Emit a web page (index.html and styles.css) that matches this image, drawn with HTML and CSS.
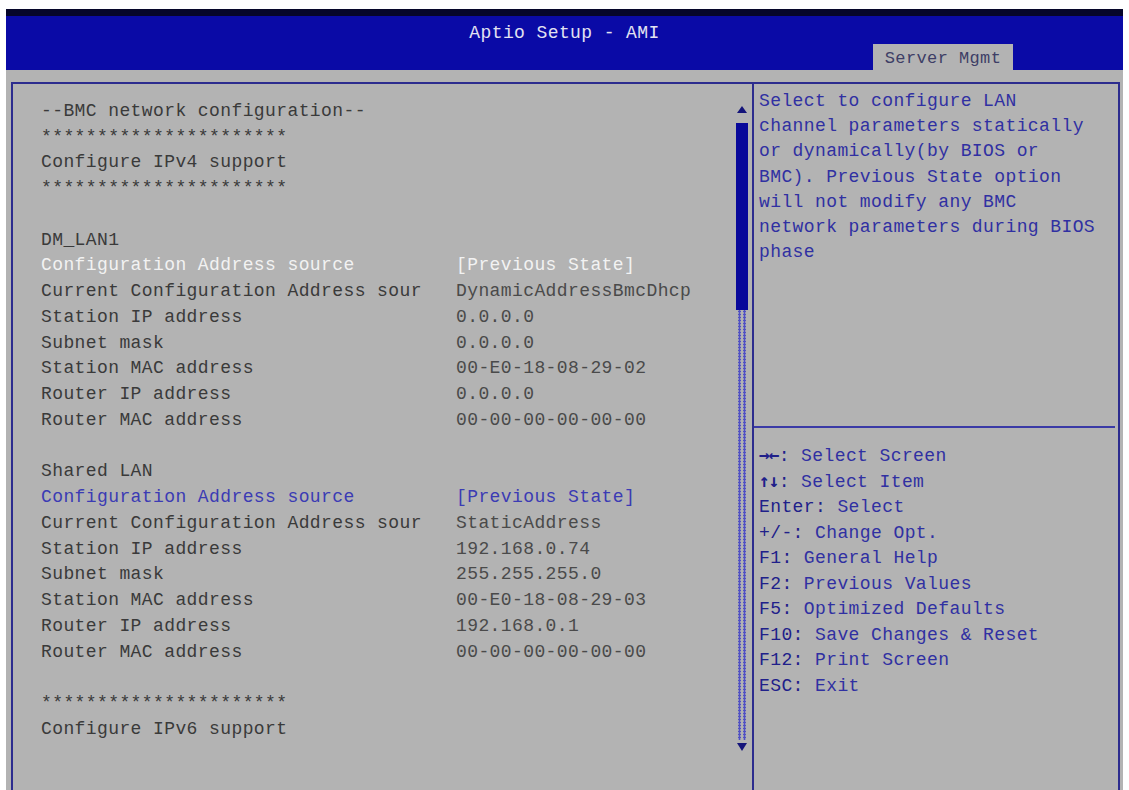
FILE: index.html
```html
<!DOCTYPE html>
<html lang="en">
<head>
    <meta charset="UTF-8">
    <meta name="viewport" content="width=device-width, initial-scale=1.0">
    <title>Aptio Setup - AMI</title>
    <link rel="stylesheet" href="styles.css">
</head>
<body>
    <div class="screen">
        <div class="topbar">
            <div class="title">Aptio Setup - AMI</div>
            <div class="tab">Server Mgmt</div>
        </div>
        <div class="strip"></div>
        <div class="frame">
            <div class="menu">
                <div class="rows">
                    <div class="full">--BMC network configuration--</div>
                    <div class="full">**********************</div>
                    <div class="full">Configure IPv4 support</div>
                    <div class="full">**********************</div>
                    <div class="full"></div>

                    <div class="full">DM_LAN1</div>
                    <div class="active">Configuration Address source</div>
                    <div class="active">[Previous State]</div>
                    <div>Current Configuration Address sour</div>
                    <div class="val">DynamicAddressBmcDhcp</div>
                    <div>Station IP address</div>
                    <div class="val">0.0.0.0</div>
                    <div>Subnet mask</div>
                    <div class="val">0.0.0.0</div>
                    <div>Station MAC address</div>
                    <div class="val">00-E0-18-08-29-02</div>
                    <div>Router IP address</div>
                    <div class="val">0.0.0.0</div>
                    <div>Router MAC address</div>
                    <div class="val">00-00-00-00-00-00</div>
                    <div class="full"></div>

                    <div class="full">Shared LAN</div>
                    <div class="option">Configuration Address source</div>
                    <div class="option">[Previous State]</div>
                    <div>Current Configuration Address sour</div>
                    <div class="val">StaticAddress</div>
                    <div>Station IP address</div>
                    <div class="val">192.168.0.74</div>
                    <div>Subnet mask</div>
                    <div class="val">255.255.255.0</div>
                    <div>Station MAC address</div>
                    <div class="val">00-E0-18-08-29-03</div>
                    <div>Router IP address</div>
                    <div class="val">192.168.0.1</div>
                    <div>Router MAC address</div>
                    <div class="val">00-00-00-00-00-00</div>
                    <div class="full"></div>

                    <div class="full">**********************</div>
                    <div class="full">Configure IPv6 support</div>
                </div>
                <div class="scrollbar">
                    <div class="arrow-up"></div>
                    <div class="thumb"></div>
                    <div class="track"></div>
                    <div class="arrow-down"></div>
                </div>
            </div>
            <div class="side">
                <div class="help">
                    Select to configure LAN<br>
                    channel parameters statically<br>
                    or dynamically(by BIOS or<br>
                    BMC). Previous State option<br>
                    will not modify any BMC<br>
                    network parameters during BIOS<br>
                    phase
                </div>
                <div class="keys">
                    <div><span class="key arrows">&rarr;&larr;</span><span class="key">:</span> Select Screen</div>
                    <div><span class="key arrows">&uarr;&darr;</span><span class="key">:</span> Select Item</div>
                    <div><span class="key">Enter:</span> Select</div>
                    <div><span class="key">+/-:</span> Change Opt.</div>
                    <div><span class="key">F1:</span> General Help</div>
                    <div><span class="key">F2:</span> Previous Values</div>
                    <div><span class="key">F5:</span> Optimized Defaults</div>
                    <div><span class="key">F10:</span> Save Changes &amp; Reset</div>
                    <div><span class="key">F12:</span> Print Screen</div>
                    <div><span class="key">ESC:</span> Exit</div>
                </div>
            </div>
        </div>
    </div>
</body>
</html>
```

FILE: styles.css
```css
body {
    margin: 0;
    padding: 0;
    background: #fff;
    height: 790px;
    overflow: hidden;
    font-family: "Liberation Mono", "DejaVu Sans Mono", monospace;
    font-size: 18px;
    letter-spacing: 0.4px;
    color: #3a3a3a;
}
.screen {
    margin: 9px 6px 0 6px;
    background: #b3b3b3;
    height: 781px;
    display: flex;
    flex-direction: column;
}

/* blue title bar with the page tab */
.topbar {
    background: #0a0aa6;
    border-top: 7px solid #06062a;
    height: 54px;
    display: flex;
    flex-direction: column;
}
.title {
    text-align: center;
    color: #e2e2f2;
    padding-top: 6px;
    line-height: 23px;
    height: 22px;
}
.tab {
    align-self: flex-end;
    margin-right: 110px;
    width: 140px;
    height: 26px;
    line-height: 29px;
    background: #b3b3b3;
    color: #3e3e66;
    font-size: 17px;
    text-align: center;
}
.strip {
    height: 12px;
}

/* main frame */
.frame {
    border: 2px solid #2c2c8e;
    border-bottom: none;
    margin: 0 3px 0 5px;
    flex: 1;
    display: flex;
}
.menu {
    width: 739px;
    display: flex;
}
.rows {
    flex: 1;
    padding: 14px 0 0 28px;
    display: grid;
    grid-template-columns: 415px auto;
    grid-auto-rows: 25.75px;
    align-items: center;
    align-content: start;
    white-space: pre;
}
.rows .full {
    grid-column: 1 / -1;
}
.rows .val {
    color: #4a4a4a;
}
.rows .active {
    color: #f2f2f2;
}
.rows .option {
    color: #3b3bb4;
}

/* scroll bar */
.scrollbar {
    width: 12px;
    margin-right: 4px;
    padding-top: 22px;
    display: flex;
    flex-direction: column;
    align-items: center;
}
.arrow-up {
    width: 0;
    height: 0;
    border-left: 5px solid transparent;
    border-right: 5px solid transparent;
    border-bottom: 7px solid #14147a;
    margin-bottom: 10px;
}
.thumb {
    width: 12px;
    height: 187px;
    background: #08089a;
}
.track {
    width: 10px;
    height: 430px;
    background: radial-gradient(circle, #5050c4 1px, transparent 1.6px) 0 0 / 5px 3px;
}
.arrow-down {
    width: 0;
    height: 0;
    border-left: 5px solid transparent;
    border-right: 5px solid transparent;
    border-top: 8px solid #14147a;
    margin-top: 3px;
}

/* help column on the right */
.side {
    flex: 1;
    border-left: 2px solid #2c2c8e;
    display: flex;
    flex-direction: column;
}
.help {
    height: 337px;
    padding: 5px 0 0 5px;
    line-height: 25.2px;
    color: #3030a2;
    border-bottom: 2px solid #3a3aa6;
    margin-right: 3px;
}
.keys {
    padding: 16px 0 0 5px;
    color: #3030a2;
}
.keys div {
    height: 25.5px;
    line-height: 25.5px;
}
.keys .key {
    color: #20208a;
}
.keys .arrows {
    font-family: "DejaVu Sans Mono", monospace;
    font-weight: bold;
    letter-spacing: -1px;
    line-height: 1;
}
```
